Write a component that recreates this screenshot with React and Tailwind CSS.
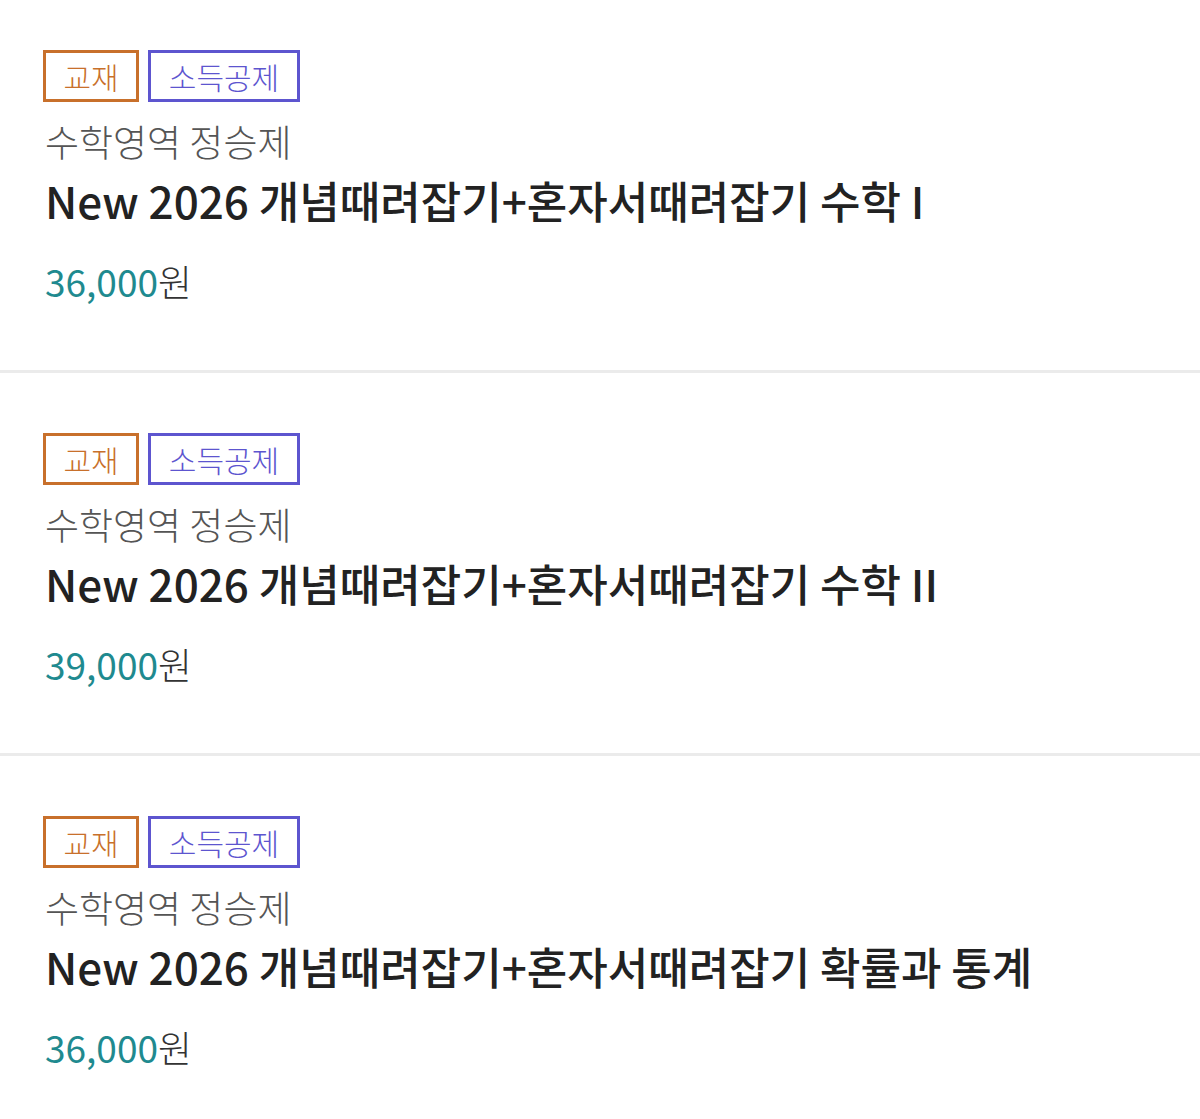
const items = [
  { teacher: "수학영역 정승제", title: "New 2026 개념때려잡기+혼자서때려잡기 수학 I", price: "36,000" },
  { teacher: "수학영역 정승제", title: "New 2026 개념때려잡기+혼자서때려잡기 수학 II", price: "39,000" },
  { teacher: "수학영역 정승제", title: "New 2026 개념때려잡기+혼자서때려잡기 확률과 통계", price: "36,000" },
];

export default function App() {
  return (
    <main
      className="min-h-screen bg-white"
      style={{ fontFamily: '"Noto Sans CJK KR", "Noto Sans", sans-serif' }}
    >
      {items.map((item, i) => (
        <section
          key={i}
          className={`px-[43px] pb-[65px] ${i === 0 ? "pt-[50px]" : "pt-[60px] border-t-[3px] border-[#ebebeb]"}`}
        >
          <div className="flex gap-[9px]">
            <span className="flex h-[52px] w-[96px] items-center justify-center border-[3px] border-[#c8702b] text-[30px] font-light text-[#c8702b]">
              교재
            </span>
            <span className="flex h-[52px] w-[152px] items-center justify-center border-[3px] border-[#5d55cf] text-[30px] font-light text-[#5d55cf]">
              소득공제
            </span>
          </div>
          <p className="mt-[15px] pl-[2px] text-[37px] leading-[48px] font-light text-[#555555]">
            {item.teacher}
          </p>
          <h2 className="mt-[7px] pl-[2px] text-[44px] leading-[56px] font-medium text-[#222222]">
            {item.title}
          </h2>
          <p className="mt-[29px] pl-[2px] text-[37px] leading-[48px]">
            <span className="text-[#1f8a8f]">{item.price}</span>
            <span className="font-light text-[#333333]">원</span>
          </p>
        </section>
      ))}
    </main>
  );
}
